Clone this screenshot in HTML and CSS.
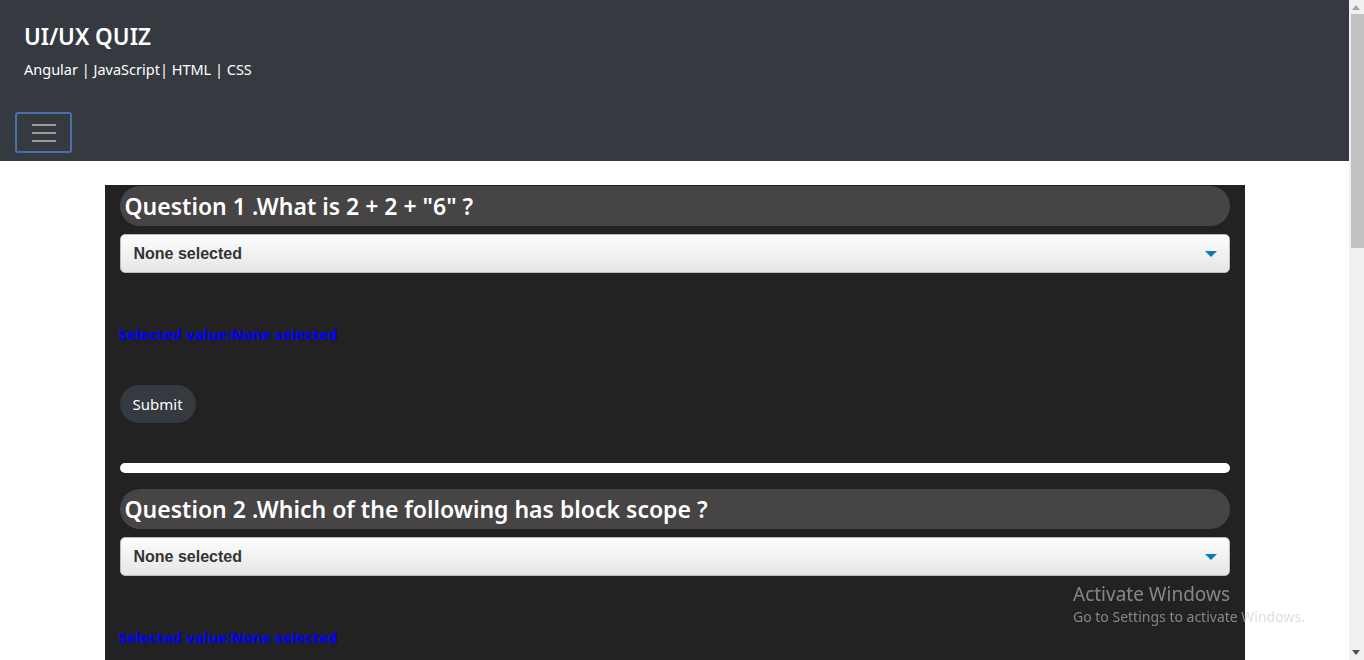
FILE: index.html
```html
<!DOCTYPE html>
<html lang="en">
<head>
<meta charset="utf-8">
<title>UI/UX QUIZ</title>
<link rel="stylesheet" href="styles.css">
</head>
<body>
<header class="topbar">
  <div class="brand">
    <h1 class="brand-title">UI/UX QUIZ</h1>
    <p class="brand-sub">Angular | JavaScript| HTML | CSS</p>
  </div>
  <button class="toggler" type="button" aria-label="Toggle navigation">
    <span class="bar"></span><span class="bar"></span><span class="bar"></span>
  </button>
</header>

<main class="quiz">
  <section class="question">
    <h2 class="q-title">Question 1 .What is 2 + 2 + "6" ?</h2>
    <div class="select"><span>None selected</span><span class="caret"></span></div>
    <p class="selected-value">Selected value:None selected</p>
    <button class="submit" type="button">Submit</button>
    <div class="divider"></div>
  </section>
  <section class="question">
    <h2 class="q-title">Question 2 .Which of the following has block scope ?</h2>
    <div class="select"><span>None selected</span><span class="caret"></span></div>
    <p class="selected-value">Selected value:None selected</p>
    <button class="submit" type="button">Submit</button>
    <div class="divider"></div>
  </section>
</main>

<div class="watermark">
  <div class="wm-title">Activate Windows</div>
  <div class="wm-sub">Go to Settings to activate Windows.</div>
</div>

<div class="scrollbar" aria-hidden="true">
  <span class="sb-up"></span>
  <span class="sb-thumb"></span>
  <span class="sb-down"></span>
</div>
</body>
</html>
```
FILE: styles.css
```css
html, body {
  margin: 0;
  padding: 0;
}
body {
  font-family: "Noto Sans", "Open Sans", sans-serif;
  background: #fff;
  color: #fff;
  margin-right: 15px;
  min-height: 1780px;
}
.topbar {
  background: #343a40;
  height: 161px;
  box-sizing: border-box;
  padding: 20px 15px 0;
}
.brand {
  padding-left: 9px;
}
.brand-title {
  margin: 0;
  font-size: 22.5px;
  font-weight: 600;
  line-height: 34px;
  color: #fff;
}
.brand-sub {
  margin: 0;
  font-size: 14.5px;
  line-height: 30px;
  color: #fff;
}
.toggler {
  margin-top: 28px;
  width: 57px;
  height: 41px;
  background: transparent;
  border: 2px solid #4a6fab;
  border-radius: 3px;
  display: flex;
  flex-direction: column;
  align-items: center;
  justify-content: center;
  gap: 6px;
  padding: 0;
}
.toggler .bar {
  width: 24px;
  height: 2px;
  background: #9a9c9e;
}
.quiz {
  width: 1140px;
  margin: 24px auto 0;
  background: #222;
  box-sizing: border-box;
  padding: 1px 15px 40px;
  min-height: 1400px;
}
.question + .question {
  margin-top: 16px;
}
.q-title {
  margin: 0;
  height: 40px;
  line-height: 40px;
  padding: 0 5px;
  border-radius: 20px;
  background: #464444;
  font-size: 23px;
  font-weight: 600;
  color: #fff;
}
.select {
  margin-top: 8px;
  height: 39px;
  box-sizing: border-box;
  border: 1px solid #bbb;
  border-radius: 5px;
  background: linear-gradient(#fdfdfd, #e6e6e6);
  display: flex;
  align-items: center;
  justify-content: space-between;
  padding: 0 12px 0 13px;
  font-family: "Liberation Sans", Arial, sans-serif;
  font-weight: bold;
  font-size: 16px;
  color: #333;
}
.caret {
  width: 0;
  height: 0;
  border-left: 6px solid transparent;
  border-right: 6px solid transparent;
  border-top: 6px solid #0a7ac0;
}
.selected-value {
  margin: 51px 0 0 -1px;
  font-size: 15px;
  line-height: 20px;
  font-weight: 700;
  color: #0000ff;
}
.submit {
  margin-top: 41px;
  height: 38px;
  padding: 0 13px;
  border: none;
  border-radius: 19px;
  background: #343a40;
  color: #fff;
  font-family: "Noto Sans", "Open Sans", sans-serif;
  font-size: 15px;
}
.divider {
  margin-top: 40px;
  height: 10px;
  border-radius: 5px;
  background: #fff;
}
.watermark {
  position: fixed;
  left: 1073px;
  top: 582px;
  color: rgba(200, 200, 200, 0.6);
  font-family: "Noto Sans", "Open Sans", sans-serif;
  pointer-events: none;
}
.wm-title {
  font-size: 19px;
  line-height: 24px;
}
.wm-sub {
  font-size: 14px;
  line-height: 22px;
}
.scrollbar {
  position: fixed;
  top: 0;
  right: 0;
  width: 15px;
  height: 100vh;
  background: #f1f1f1;
}
.sb-up,
.sb-down {
  position: absolute;
  left: 3px;
  width: 0;
  height: 0;
  border-left: 4.5px solid transparent;
  border-right: 4.5px solid transparent;
}
.sb-up {
  top: 5px;
  border-bottom: 5px solid #a3a3a3;
}
.sb-down {
  bottom: 5px;
  border-top: 5px solid #505050;
}
.sb-thumb {
  position: absolute;
  top: 14px;
  left: 2px;
  width: 13px;
  height: 234px;
  background: #c1c1c1;
}
```
